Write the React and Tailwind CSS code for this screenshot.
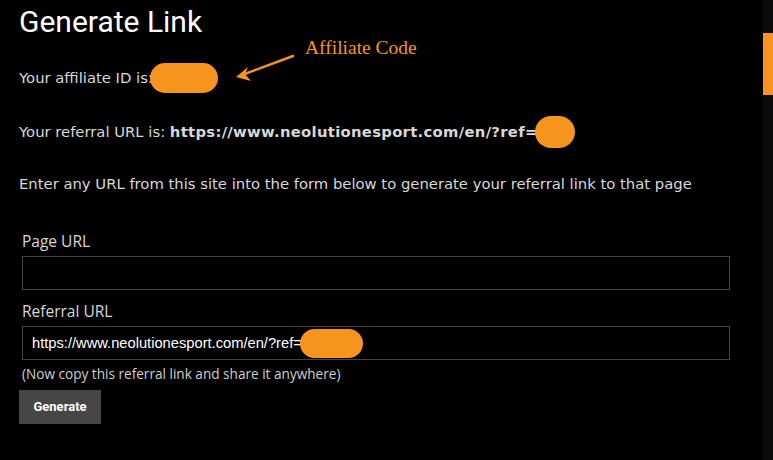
export default function App() {
  return (
    <div className="w-[773px] h-[460px] bg-black flex overflow-hidden">
      <div className="relative flex-1 flex flex-col pl-[19px] pr-[33px]">
        <h1 className="text-white text-[30px] leading-[30px] mt-[7px] font-['Roboto',sans-serif]">Generate Link</h1>
        <div className="mt-[26px] flex items-center h-[30px] text-[#d8d8d8] text-[14.8px] font-['DejaVu_Sans',sans-serif]">
          <span>Your affiliate ID is:</span>
          <span className="inline-block w-[68px] h-[30px] rounded-full bg-[#f7941d] -ml-[3px]"></span>
        </div>
        <div className="mt-[23px] flex items-center h-[32px] text-[#d8d8d8] text-[14.8px] font-['DejaVu_Sans',sans-serif]">
          <span>Your referral URL is:&nbsp;</span>
          <span className="font-bold tracking-[0.3px]">https://www.neolutionesport.com/en/?ref=</span>
          <span className="inline-block w-[40px] h-[32px] rounded-full bg-[#f7941d] -ml-[3px]"></span>
        </div>
        <p className="mt-[27px] text-[#d8d8d8] text-[14.8px] leading-[18px] font-['DejaVu_Sans',sans-serif]">
          Enter any URL from this site into the form below to generate your referral link to that page
        </p>
        <div className="pl-[3px] flex flex-col font-['Open_Sans',sans-serif]">
          <label className="mt-[38px] text-[#d8d8d8] text-[15.5px] leading-[20px]">Page URL</label>
          <div className="mt-[5px] h-[34px] border border-[#444] bg-black"></div>
          <label className="mt-[11px] text-[#d8d8d8] text-[15.5px] leading-[20px]">Referral URL</label>
          <div className="mt-[5px] h-[34px] border border-[#444] bg-black flex items-center pl-[9px]">
            <span className="text-white text-[14.7px] font-['Liberation_Sans',sans-serif]">https://www.neolutionesport.com/en/?ref=</span>
            <span className="inline-block w-[63px] h-[29px] rounded-full bg-[#f7941d] -ml-[2px]"></span>
          </div>
          <p className="mt-[5px] text-[#cfcfcf] text-[13.6px] leading-[18px]">(Now copy this referral link and share it anywhere)</p>
        </div>
        <button className="mt-[7px] w-[82px] h-[34px] bg-[#464646] text-white text-[13px] font-bold font-['Roboto',sans-serif]">Generate</button>

        <svg className="absolute left-[232px] top-[50px]" width="66" height="32" viewBox="0 0 66 32">
          <line x1="61" y1="6" x2="10" y2="25" stroke="#f7941d" strokeWidth="2.5" strokeLinecap="round" />
          <path d="M4 27 L16 17 L13 24 L19 31 Z" fill="#f7941d" />
        </svg>
        <span className="absolute left-[305px] top-[36px] text-[#f7941d] text-[19.5px] leading-[24px] font-['Liberation_Serif',serif]">Affiliate Code</span>
      </div>
      <div className="w-[10px] flex flex-col bg-[#0b0b0b]">
        <div className="mt-[33px] h-[62px] bg-[#f7931e]"></div>
      </div>
    </div>
  );
}
